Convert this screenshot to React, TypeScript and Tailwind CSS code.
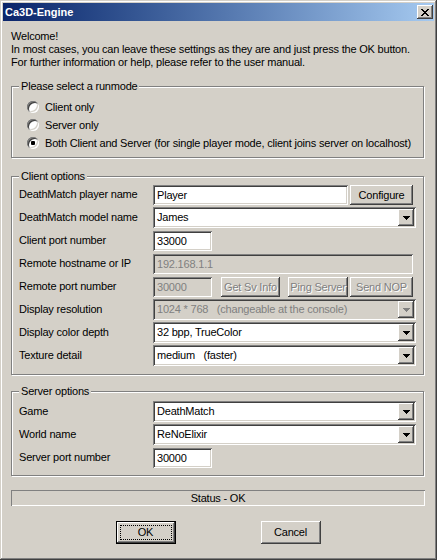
import React from "react";

const SUNKEN =
  "shadow-[inset_1px_1px_0_#808080,inset_-1px_-1px_0_#ffffff,inset_2px_2px_0_#404040,inset_-2px_-2px_0_#d4d0c8]";
const RAISED =
  "shadow-[inset_-1px_-1px_0_#404040,inset_1px_1px_0_#ffffff,inset_-2px_-2px_0_#808080]";

function Tri({ gray }: { gray?: boolean }) {
  return (
    <svg width="7" height="4" viewBox="0 0 7 4" shapeRendering="crispEdges">
      <path d="M0 0H7V1H6V2H5V3H4V4H3V3H2V2H1V1H0Z" fill={gray ? "#808080" : "#000"} />
    </svg>
  );
}

function CloseGlyph() {
  const px: [number, number][] = [];
  const rows = ["XX....XX", ".XX..XX.", "..XXXX..", "...XX...", "..XXXX..", ".XX..XX.", "XX....XX"];
  rows.forEach((r, y) => r.split("").forEach((c, x) => c === "X" && px.push([x, y])));
  return (
    <svg width="8" height="7" viewBox="0 0 8 7" shapeRendering="crispEdges">
      {px.map(([x, y]) => (
        <rect key={`${x}-${y}`} x={x} y={y} width="1" height="1" fill="#000" />
      ))}
    </svg>
  );
}

function Radio({ checked, label }: { checked?: boolean; label: string }) {
  return (
    <div className="flex h-[18px] items-center">
      <div className="relative flex h-[12px] w-[12px] items-center justify-center rounded-full bg-white shadow-[inset_1px_1px_0_#808080,inset_-1px_-1px_0_#ffffff,inset_2px_2px_0_#404040,inset_-2px_-2px_0_#d4d0c8]">
        {checked && <div className="h-[4px] w-[4px] rounded-[1px] bg-black" />}
      </div>
      <span className="ml-[6px] leading-[13px]">{label}</span>
    </div>
  );
}

function GroupBox({
  title,
  className,
  children,
}: {
  title: string;
  className: string;
  children: React.ReactNode;
}) {
  return (
    <div
      className={`relative w-[413px] border border-[#808080] shadow-[inset_1px_1px_0_#ffffff,1px_1px_0_#ffffff] ${className}`}
    >
      <span className="absolute -top-[7px] left-[7px] bg-[#d4d0c8] px-[2px] leading-[13px]">
        {title}
      </span>
      {children}
    </div>
  );
}

function Field({
  w,
  value,
  disabled,
}: {
  w: string;
  value: string;
  disabled?: boolean;
}) {
  return (
    <div
      className={`mt-px flex h-[20px] items-center whitespace-pre pl-[4px] leading-[13px] ${w} ${SUNKEN} ${
        disabled ? "bg-[#d4d0c8] text-[#808080]" : "bg-white text-black"
      }`}
    >
      {value}
    </div>
  );
}

function Select({ value, disabled }: { value: string; disabled?: boolean }) {
  return (
    <div
      className={`flex h-[21px] w-[263px] items-center p-[2px] ${SUNKEN} ${
        disabled ? "bg-[#d4d0c8] text-[#808080]" : "bg-white text-black"
      }`}
    >
      <span className="flex-1 whitespace-pre pl-[2px] leading-[13px]">{value}</span>
      <div className={`flex h-[17px] w-[16px] items-center justify-center bg-[#d4d0c8] ${RAISED}`}>
        <Tri gray={disabled} />
      </div>
    </div>
  );
}

function Btn({
  w,
  label,
  disabled,
  className = "",
}: {
  w: string;
  label: string;
  disabled?: boolean;
  className?: string;
}) {
  return (
    <div
      className={`mt-px flex h-[20px] items-center justify-center whitespace-nowrap bg-[#d4d0c8] leading-[13px] ${w} ${RAISED} ${
        disabled ? "text-[#808080] [text-shadow:1px_1px_0_#ffffff]" : "text-black"
      } ${className}`}
    >
      {label}
    </div>
  );
}

function Row({ label, children }: { label: string; children: React.ReactNode }) {
  return (
    <div className="flex h-[21px] items-start">
      <div className="flex h-[21px] w-[134px] shrink-0 items-center leading-[13px]">{label}</div>
      {children}
    </div>
  );
}

export default function App() {
  return (
    <div className="font-['Liberation_Sans',Arial,sans-serif] text-[11px] tracking-[-0.2px] text-black">
      <div className="flex h-[560px] w-[437px] flex-col bg-[#d4d0c8] p-[3px] shadow-[inset_-1px_-1px_0_#404040,inset_1px_1px_0_#d4d0c8,inset_-2px_-2px_0_#808080,inset_2px_2px_0_#ffffff]">
        {/* Title bar */}
        <div className="flex h-[18px] items-center bg-gradient-to-r from-[#0a246a] to-[#a6caf0] pl-[2px] pr-[1px]">
          <span className="flex-1 text-[11px] font-bold tracking-normal text-white">Ca3D-Engine</span>
          <div className={`flex h-[14px] w-[16px] items-center justify-center bg-[#d4d0c8] ${RAISED}`}>
            <CloseGlyph />
          </div>
        </div>

        {/* Body */}
        <div className="flex flex-col px-[8px] pt-[9px]">
          <div className="leading-[13px]">
            <div>Welcome!</div>
            <div>In most cases, you can leave these settings as they are and just press the OK button.</div>
            <div>For further information or help, please refer to the user manual.</div>
          </div>

          <GroupBox title="Please select a runmode" className="mt-[17px] pb-[5px] pl-[15px] pt-[11px]">
            <Radio label="Client only" />
            <Radio label="Server only" />
            <Radio checked label="Both Client and Server (for single player mode, client joins server on localhost)" />
          </GroupBox>

          <GroupBox title="Client options" className="mt-[18px] pb-[8px] pl-[7px] pt-[7px]">
            <div className="flex flex-col gap-[2px]">
              <Row label="DeathMatch player name">
                <Field w="w-[195px]" value="Player" />
                <Btn w="w-[63px]" label="Configure" className="ml-[2px]" />
              </Row>
              <Row label="DeathMatch model name">
                <Select value="James" />
              </Row>
              <Row label="Client port number">
                <Field w="w-[59px]" value="33000" />
              </Row>
              <Row label="Remote hostname or IP">
                <Field w="w-[260px]" value="192.168.1.1" disabled />
              </Row>
              <Row label="Remote port number">
                <Field w="w-[59px]" value="30000" disabled />
                <Btn w="w-[59px]" label="Get Sv Info" disabled className="ml-[9px]" />
                <Btn w="w-[60px]" label="Ping Server" disabled className="ml-[8px]" />
                <Btn w="w-[63px]" label="Send NOP" disabled className="ml-[2px]" />
              </Row>
              <Row label="Display resolution">
                <Select value="1024 * 768   (changeable at the console)" disabled />
              </Row>
              <Row label="Display color depth">
                <Select value="32 bpp, TrueColor" />
              </Row>
              <Row label="Texture detail">
                <Select value="medium   (faster)" />
              </Row>
            </div>
          </GroupBox>

          <GroupBox title="Server options" className="mt-[16px] pb-[7px] pl-[7px] pt-[9px]">
            <div className="flex flex-col gap-[2px]">
              <Row label="Game">
                <Select value="DeathMatch" />
              </Row>
              <Row label="World name">
                <Select value="ReNoElixir" />
              </Row>
              <Row label="Server port number">
                <Field w="w-[59px]" value="30000" />
              </Row>
            </div>
          </GroupBox>

          <div className="mt-[14px] flex h-[16px] w-[414px] items-center justify-center leading-[13px] shadow-[inset_1px_1px_0_#808080,inset_-1px_-1px_0_#ffffff]">
            Status - OK
          </div>

          <div className="mt-[15px] flex justify-center gap-[85px] pr-[1px]">
            <div className="flex h-[23px] w-[60px] border border-black bg-[#d4d0c8] p-0">
              <div className={`flex flex-1 items-center justify-center ${RAISED} p-[3px]`}>
                <div className="flex h-full w-full items-center justify-center border border-dotted border-black leading-[13px]">
                  OK
                </div>
              </div>
            </div>
            <div className={`flex h-[23px] w-[60px] items-center justify-center bg-[#d4d0c8] leading-[13px] ${RAISED}`}>
              Cancel
            </div>
          </div>
        </div>
      </div>
    </div>
  );
}
